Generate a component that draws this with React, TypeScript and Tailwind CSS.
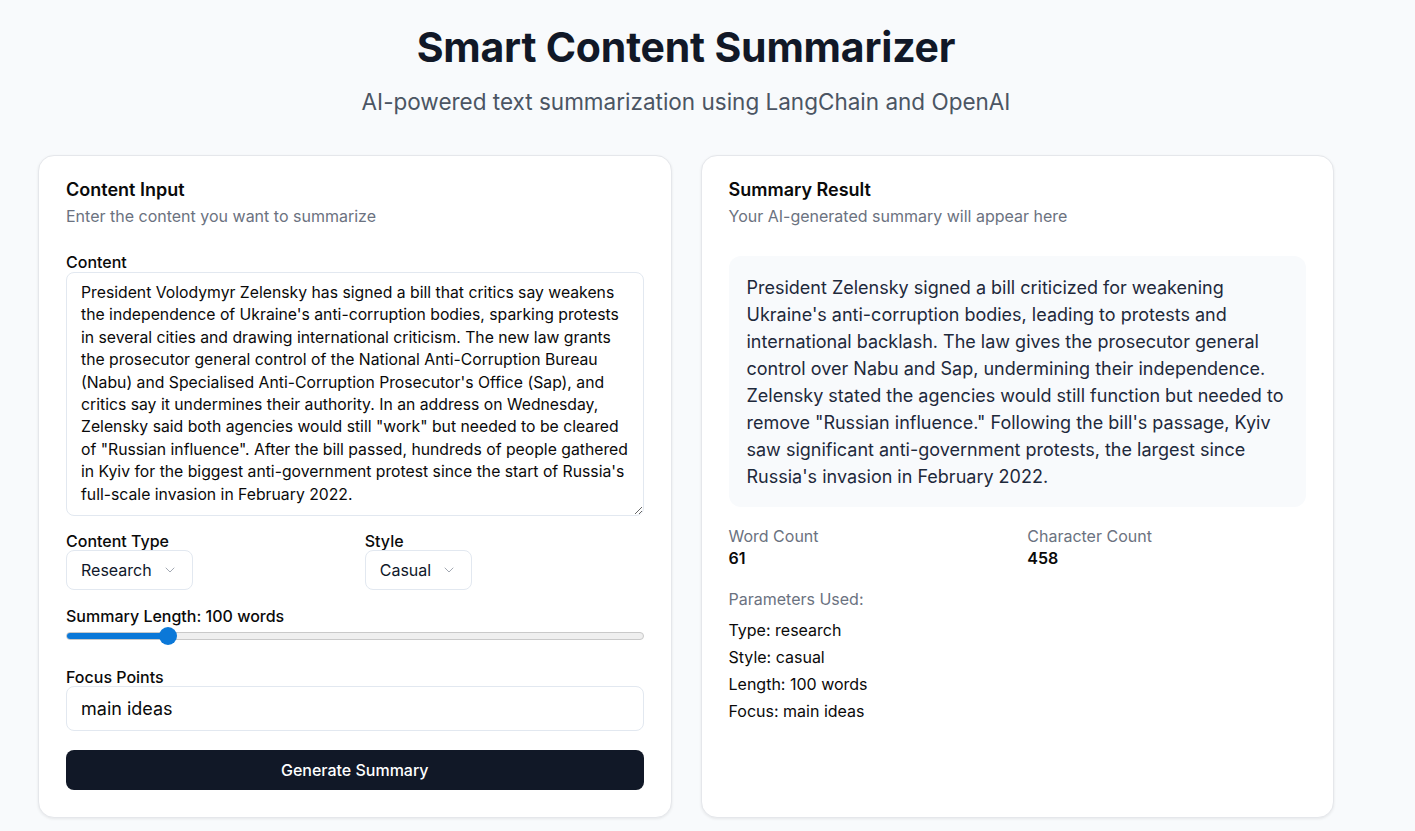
import { ReactElement } from "react";
import { ChevronDown } from "lucide-react";

const content =
  "President Volodymyr Zelensky has signed a bill that critics say weakens the independence of Ukraine's anti-corruption bodies, sparking protests in several cities and drawing international criticism. The new law grants the prosecutor general control of the National Anti-Corruption Bureau (Nabu) and Specialised Anti-Corruption Prosecutor's Office (Sap), and critics say it undermines their authority. In an address on Wednesday, Zelensky said both agencies would still \"work\" but needed to be cleared of \"Russian influence\". After the bill passed, hundreds of people gathered in Kyiv for the biggest anti-government protest since the start of Russia's full-scale invasion in February 2022.";

const summary =
  "President Zelensky signed a bill criticized for weakening Ukraine's anti-corruption bodies, leading to protests and international backlash. The law gives the prosecutor general control over Nabu and Sap, undermining their independence. Zelensky stated the agencies would still function but needed to remove \"Russian influence.\" Following the bill's passage, Kyiv saw significant anti-government protests, the largest since Russia's invasion in February 2022.";

function Select({ value }: { value: string }): ReactElement {
  return (
    <div className="h-[40px] inline-flex items-center gap-[10px] px-[14px] border border-[#e2e8f0] rounded-[8px] bg-white text-[16px] text-[#0f172a]">
      <span>{value}</span>
      <ChevronDown size={16} strokeWidth={1.5} className="text-[#a3a9b3]" />
    </div>
  );
}

export default function App(): ReactElement {
  const pct = 100 / 600;
  return (
    <div className="min-h-[831px] w-full bg-[#f8fafc] font-['Inter','Noto_Sans',sans-serif]">
      <div className="w-[1372px] px-[38px] pt-[23px] pb-[13px]">
        <h1 className="text-center text-[41px] leading-[48px] font-bold text-[#111827] tracking-[-0.2px]">
          Smart Content Summarizer
        </h1>
        <p className="mt-[16px] text-center text-[22.5px] leading-[30px] text-[#4b5563]">
          AI-powered text summarization using LangChain and OpenAI
        </p>

        <div className="mt-[38px] grid grid-cols-2 gap-[29px]">
          {/* input card */}
          <div className="bg-white border border-[#e5e7eb] rounded-[16px] shadow-[0_1px_3px_rgba(0,0,0,0.08)] px-[27px] pt-[20px] pb-[27px] flex flex-col">
            <p className="text-[18px] leading-[28px] font-semibold text-[#0a0a0a]">Content Input</p>
            <p className="text-[16px] leading-[24px] text-[#6b7280]">Enter the content you want to summarize</p>

            <label className="mt-[24px] text-[16px] leading-[20px] font-medium text-[#0a0a0a]">Content</label>
            <textarea
              readOnly
              value={content}
              className="block w-full h-[244px] border border-[#e2e8f0] rounded-[8px] px-[14px] py-[9px] text-[15.75px] leading-[22.4px] text-[#0a0a0a] resize-y outline-none overflow-hidden"
            />

            <div className="mt-[16px] grid grid-cols-2 gap-5">
              <div className="flex flex-col items-start">
                <span className="text-[16px] leading-[18px] font-medium text-[#0a0a0a]">Content Type</span>
                <Select value="Research" />
              </div>
              <div className="flex flex-col items-start">
                <span className="text-[16px] leading-[18px] font-medium text-[#0a0a0a]">Style</span>
                <Select value="Casual" />
              </div>
            </div>

            <span className="mt-[17px] text-[16px] leading-[18px] font-medium text-[#0a0a0a]">Summary Length: 100 words</span>
            <div className="relative h-[22px] flex items-center">
              <div className="w-full h-[8px] rounded-full bg-[#efefef] border border-[#c9c9c9] overflow-hidden">
                <div className="h-full bg-[#0b78d8]" style={{ width: `${pct * 100 + 1}%` }} />
              </div>
              <div
                className="absolute top-[2px] w-[18px] h-[18px] rounded-full bg-[#0b78d8]"
                style={{ left: `calc(${pct * 100}% - 9px + 6px)` }}
              />
            </div>

            <span className="mt-[21px] text-[16px] leading-[18px] font-medium text-[#0a0a0a]">Focus Points</span>
            <div className="h-[45px] border border-[#e2e8f0] rounded-[8px] px-[14px] flex items-center text-[18px] text-[#0a0a0a]">
              main ideas
            </div>

            <button className="mt-[19px] h-[40px] w-full rounded-[8px] bg-[#111827] text-white text-[16px] font-medium">
              Generate Summary
            </button>
          </div>

          {/* result card */}
          <div className="bg-white border border-[#e5e7eb] rounded-[16px] shadow-[0_1px_3px_rgba(0,0,0,0.08)] px-[27px] pt-[20px] pb-[27px] flex flex-col">
            <p className="text-[18px] leading-[28px] font-semibold text-[#0a0a0a]">Summary Result</p>
            <p className="text-[16px] leading-[24px] text-[#6b7280]">Your AI-generated summary will appear here</p>

            <div className="mt-[28px] bg-[#f8fafc] rounded-[12px] px-[18px] py-[17.5px] text-[18px] leading-[27px] text-[#1e293b]">
              {summary}
            </div>

            <div className="mt-[18px] grid grid-cols-2 gap-5">
              <div>
                <p className="text-[16px] leading-[22px] text-[#6b7280]">Word Count</p>
                <p className="text-[16px] leading-[22px] font-semibold text-[#0a0a0a]">61</p>
              </div>
              <div>
                <p className="text-[16px] leading-[22px] text-[#6b7280]">Character Count</p>
                <p className="text-[16px] leading-[22px] font-semibold text-[#0a0a0a]">458</p>
              </div>
            </div>

            <p className="mt-[19px] text-[16px] leading-[22px] text-[#6b7280]">Parameters Used:</p>
            <div className="mt-[9px] flex flex-col gap-[5px] text-[16px] leading-[22px] text-[#0a0a0a]">
              <p>Type: research</p>
              <p>Style: casual</p>
              <p>Length: 100 words</p>
              <p>Focus: main ideas</p>
            </div>
          </div>
        </div>
      </div>
    </div>
  );
}
